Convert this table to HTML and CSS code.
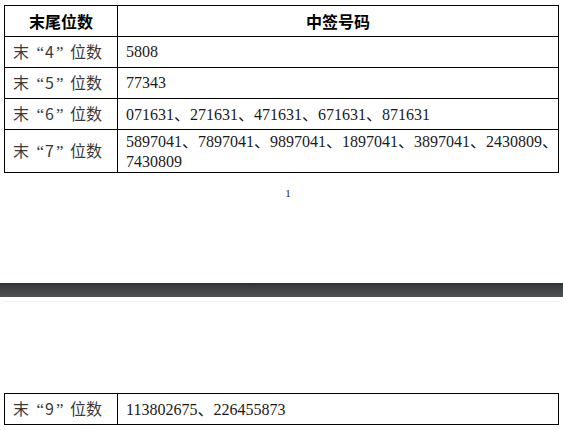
FILE: index.html
```html
<!DOCTYPE html>
<html lang="zh-CN">
<head>
<meta charset="utf-8">
<title>中签号码</title>
<link rel="stylesheet" href="styles.css">
</head>
<body>
<div class="page page-one">
  <table class="grid">
    <colgroup><col class="c1"><col class="c2"></colgroup>
    <tr class="row head">
      <th>末尾位数</th>
      <th>中签号码</th>
    </tr>
    <tr class="row">
      <td class="label">末<span class="ql">“</span>4<span class="qr">”</span>位数</td>
      <td class="nums">5808</td>
    </tr>
    <tr class="row">
      <td class="label">末<span class="ql">“</span>5<span class="qr">”</span>位数</td>
      <td class="nums">77343</td>
    </tr>
    <tr class="row">
      <td class="label">末<span class="ql">“</span>6<span class="qr">”</span>位数</td>
      <td class="nums">071631<span class="dun">、</span>271631<span class="dun">、</span>471631<span class="dun">、</span>671631<span class="dun">、</span>871631</td>
    </tr>
    <tr class="row tall">
      <td class="label">末<span class="ql">“</span>7<span class="qr">”</span>位数</td>
      <td class="nums two"><span class="line">5897041<span class="dun">、</span>7897041<span class="dun">、</span>9897041<span class="dun">、</span>1897041<span class="dun">、</span>3897041<span class="dun">、</span>2430809<span class="dun">、</span></span><span class="line">7430809</span></td>
    </tr>
  </table>
  <div class="pageno">1</div>
</div>
<div class="band"></div>
<div class="page page-two">
  <table class="grid">
    <colgroup><col class="c1"><col class="c2"></colgroup>
    <tr class="row">
      <td class="label">末<span class="ql">“</span>9<span class="qr">”</span>位数</td>
      <td class="nums">113802675<span class="dun">、</span>226455873</td>
    </tr>
  </table>
</div>
</body>
</html>
```
FILE: styles.css
```css
html, body {
  margin: 0;
  padding: 0;
  background: #ffffff;
}
body {
  width: 563px;
  height: 430px;
  overflow: hidden;
  font-family: "Liberation Serif", "Noto Sans CJK SC", serif;
  color: #1a1a1a;
}
.page-one {
  height: 283px;
  padding-top: 5px;
  box-sizing: border-box;
  display: flex;
  flex-direction: column;
}
.grid {
  border-collapse: collapse;
  table-layout: fixed;
  width: 554px;
  margin-left: 4px;
}
.c1 { width: 113px; }
.c2 { width: 441px; }
.grid th, .grid td {
  border: 1px solid #000;
  padding: 0;
  vertical-align: middle;
}
.row { height: 31px; }
.row.tall { height: 42px; }
.head th {
  font-family: "Noto Sans CJK SC", sans-serif;
  font-weight: 700;
  font-size: 16px;
  color: #000;
  text-align: center;
  line-height: 20px;
}
.label {
  font-family: "Noto Sans CJK SC", sans-serif;
  font-size: 16px;
  color: #3a3a3a;
  padding-left: 8px !important;
  white-space: nowrap;
  line-height: 20px;
}
.label .ql, .label .qr {
  display: inline-block;
  width: 16px;
  font-family: "Liberation Serif", serif;
  font-size: 17px;
}
.label .ql { text-align: right; padding-right: 1px; box-sizing: border-box; }
.label .qr { text-align: left; padding-left: 2px; box-sizing: border-box; }
.label, .label .ql, .label .qr { vertical-align: baseline; }
.nums {
  font-size: 16px;
  line-height: 20px;
  padding-left: 8px !important;
  white-space: nowrap;
  color: #1a1a1a;
}
.nums .dun {
  font-family: "Noto Sans CJK SC", sans-serif;
}
.nums.two .line {
  display: block;
}
.pageno {
  margin-top: 14px;
  text-align: center;
  font-size: 11px;
  color: #222;
  padding-left: 13px;
}
.band {
  height: 14px;
  background: linear-gradient(to bottom, #2c3034 0%, #3d4144 35%, #505356 100%);
  border-bottom: 4px solid #ffffff;
  box-shadow: 0 5px 0 -4px #f2f2f2;
}
.page-two {
  padding-top: 92px;
}
```
